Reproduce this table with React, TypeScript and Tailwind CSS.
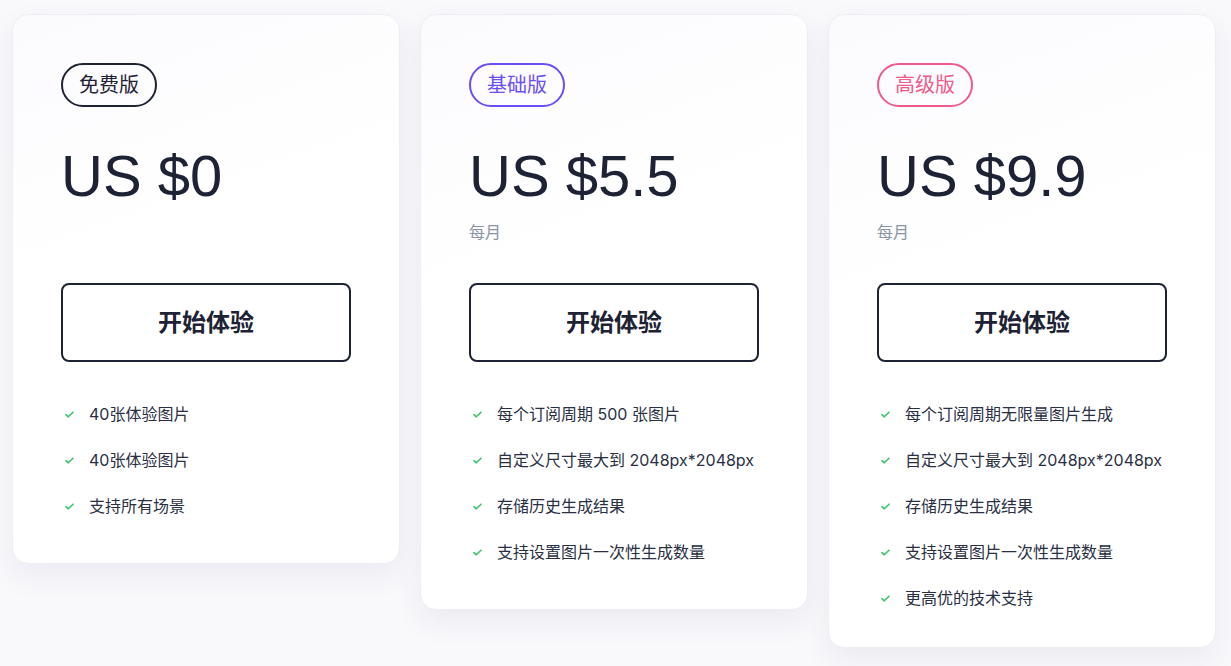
import React from "react";

type Plan = {
  badge: string;
  badgeCls: string;
  price: string;
  monthly: boolean;
  features: string[];
  pb: string;
};

const plans: Plan[] = [
  {
    badge: "免费版",
    badgeCls: "border-[#1e2235] text-[#1e2235]",
    price: "US $0",
    monthly: false,
    features: ["40张体验图片", "40张体验图片", "支持所有场景"],
    pb: "pb-[45px]",
  },
  {
    badge: "基础版",
    badgeCls: "border-[#6b4ef6] text-[#6b4ef6]",
    price: "US $5.5",
    monthly: true,
    features: [
      "每个订阅周期 500 张图片",
      "自定义尺寸最大到 2048px*2048px",
      "存储历史生成结果",
      "支持设置图片一次性生成数量",
    ],
    pb: "pb-[45px]",
  },
  {
    badge: "高级版",
    badgeCls: "border-[#ee5a8a] text-[#ee5a8a]",
    price: "US $9.9",
    monthly: true,
    features: [
      "每个订阅周期无限量图片生成",
      "自定义尺寸最大到 2048px*2048px",
      "存储历史生成结果",
      "支持设置图片一次性生成数量",
      "更高优的技术支持",
    ],
    pb: "pb-[37px]",
  },
];

function Check() {
  return (
    <svg width="9" height="7" viewBox="0 0 9 7" fill="none" className="shrink-0">
      <path d="M1 3.6 L3.3 5.8 L8 1.2" stroke="#3cc26b" strokeWidth="1.6" strokeLinecap="round" strokeLinejoin="round" />
    </svg>
  );
}

function Card({ p }: { p: Plan }) {
  return (
    <div
      className={`w-[388px] rounded-[16px] border border-[#eceef4] bg-white px-[48px] pt-[48px] ${p.pb} shadow-[0_12px_28px_rgba(60,70,120,0.08)]`}
      style={{ backgroundImage: "linear-gradient(160deg,#fbfbfe 0%,#ffffff 40%)" }}
    >
      <div
        className={`inline-flex h-[44px] items-center rounded-full border-2 px-[16px] text-[20px] ${p.badgeCls}`}
      >
        {p.badge}
      </div>
      <div
        className="mt-[39px] h-[60px] text-[58px] leading-[60px] text-[#1e2235]"
        style={{ fontFamily: '"Liberation Sans", Arial, sans-serif' }}
      >
        {p.price}
      </div>
      <div className="mt-[16px] h-[20px] text-[16px] leading-[20px] text-[#8a93a8]">
        {p.monthly ? "每月" : ""}
      </div>
      <button className="mt-[41px] flex h-[79px] w-[290px] items-center justify-center rounded-[8px] border-2 border-[#1e2235] bg-white text-[24px] font-bold text-[#1e2235]">
        开始体验
      </button>
      <ul className="mt-[40px] flex flex-col gap-[22px]">
        {p.features.map((f, i) => (
          <li key={i} className="flex h-[24px] items-center text-[16px] text-[#2a2f44]">
            <span className="ml-[4px] flex w-[24px] items-center">
              <Check />
            </span>
            <span>{f}</span>
          </li>
        ))}
      </ul>
    </div>
  );
}

export default function App() {
  return (
    <div
      className="min-h-[666px] w-full bg-[#f9f9fc]"
      style={{ fontFamily: 'Inter, "Noto Sans CJK SC", sans-serif' }}
    >
      <div className="flex items-start gap-[20px] pl-[12px] pt-[14px]">
        {plans.map((p, i) => (
          <Card key={i} p={p} />
        ))}
      </div>
    </div>
  );
}
